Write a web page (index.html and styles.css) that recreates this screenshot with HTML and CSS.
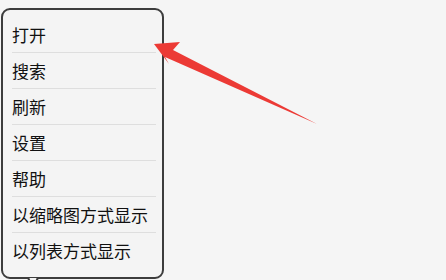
FILE: index.html
```html
<!DOCTYPE html>
<html lang="zh">
<head>
<meta charset="utf-8">
<link rel="stylesheet" href="styles.css">
</head>
<body>
<div class="stage">
  <div class="popup">
    <ul class="menu">
      <li class="item">打开</li>
      <li class="item">搜索</li>
      <li class="item">刷新</li>
      <li class="item">设置</li>
      <li class="item">帮助</li>
      <li class="item">以缩略图方式显示</li>
      <li class="item">以列表方式显示</li>
    </ul>
    <svg class="tail" width="20" height="10" viewBox="0 0 20 10">
      <path d="M0 1 L6 1 L10 8 L14 1 L20 1" fill="#f4f4f4" stroke="none"/>
      <path d="M0 1 L5 1 L9 8 M11 8 L15 1 L20 1" fill="none" stroke="#3d3d3d" stroke-width="2"/>
    </svg>
  </div>
  <svg class="arrow" width="446" height="280" viewBox="0 0 446 280">
    <polygon points="154,44 180,42 173,50 317,124 165,57 169,64" fill="#ec3a35"/>
  </svg>
</div>
</body>
</html>
```

FILE: styles.css
```css
html, body {
  margin: 0;
  padding: 0;
  background: #f5f5f5;
  width: 446px;
  height: 280px;
  overflow: hidden;
}
.stage {
  position: relative;
  width: 446px;
  height: 280px;
  padding: 8px 0 0 1px;
  box-sizing: border-box;
}
.popup {
  position: relative;
  width: 163px;
  box-sizing: border-box;
  border: 2px solid #3d3d3d;
  border-radius: 9px;
  background: #f4f4f4;
  padding: 6px 6px 9px 9px;
}
.menu {
  list-style: none;
  margin: 0;
  padding: 0;
}
.item {
  height: 36px;
  box-sizing: border-box;
  display: flex;
  align-items: center;
  padding-left: 0;
  font-family: "Noto Sans CJK SC", "Noto Sans", sans-serif;
  font-size: 17px;
  font-weight: 400;
  color: #111111;
}
.item + .item {
  border-top: 1px solid #dedede;
}
.tail {
  position: absolute;
  left: 20px;
  bottom: -10px;
}
.arrow {
  position: absolute;
  left: 0;
  top: 0;
  pointer-events: none;
}
```
